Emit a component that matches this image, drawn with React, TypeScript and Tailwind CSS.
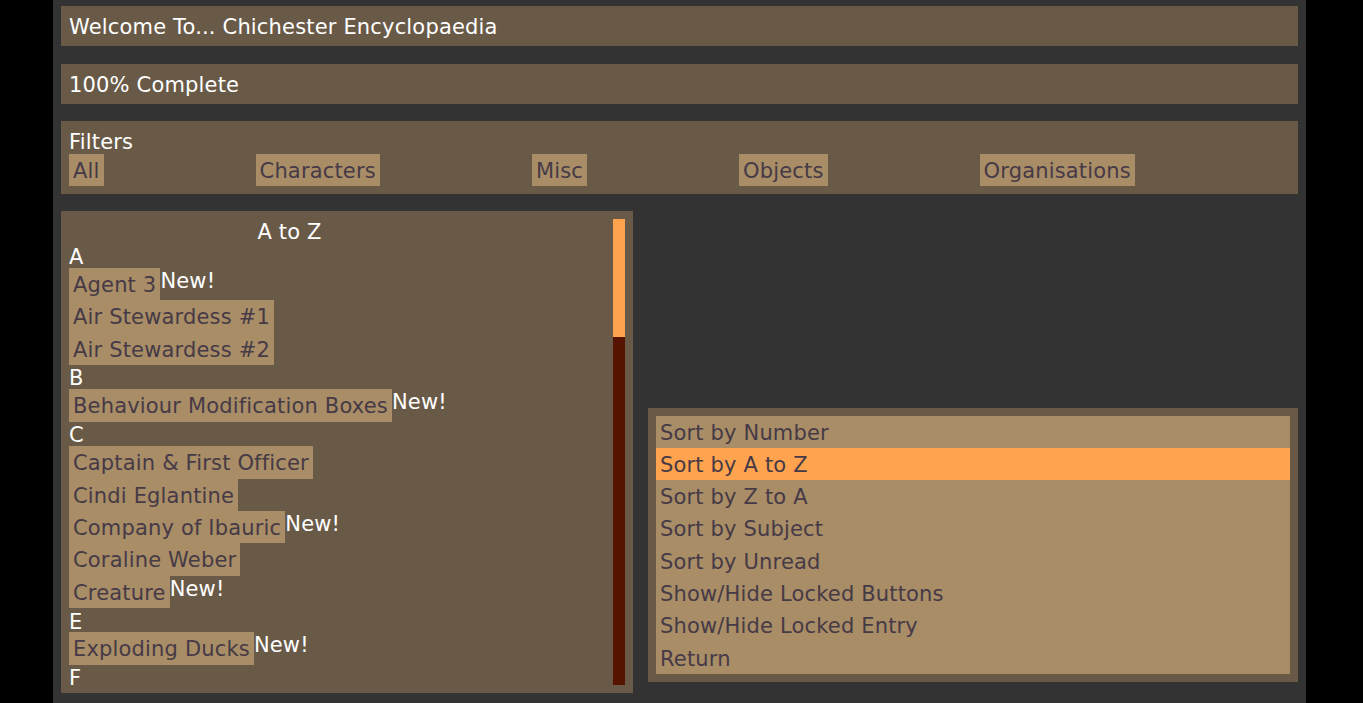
const FILTERS = ['All', 'Characters', 'Misc', 'Objects', 'Organisations'];

type Row = { letter: string } | { name: string; isNew?: boolean };

const ROWS: Row[] = [
  { letter: 'A' },
  { name: 'Agent 3', isNew: true },
  { name: 'Air Stewardess #1' },
  { name: 'Air Stewardess #2' },
  { letter: 'B' },
  { name: 'Behaviour Modification Boxes', isNew: true },
  { letter: 'C' },
  { name: 'Captain & First Officer' },
  { name: 'Cindi Eglantine' },
  { name: 'Company of Ibauric', isNew: true },
  { name: 'Coraline Weber' },
  { name: 'Creature', isNew: true },
  { letter: 'E' },
  { name: 'Exploding Ducks', isNew: true },
  { letter: 'F' },
];

const SORTS = [
  'Sort by Number',
  'Sort by A to Z',
  'Sort by Z to A',
  'Sort by Subject',
  'Sort by Unread',
  'Show/Hide Locked Buttons',
  'Show/Hide Locked Entry',
  'Return',
];

export default function App() {
  return (
    <div
      className="h-[703px] w-full overflow-hidden bg-black text-[21px] leading-[24.4px] tracking-[0.17px]"
      style={{ fontFamily: '"DejaVu Sans", "Liberation Sans", sans-serif' }}
    >
      <div className="ml-[53px] flex h-full w-[1253px] flex-col bg-[#333333] px-2 pt-[6px]">
        {/* Header bars */}
        <div className="flex h-[40px] items-center bg-[#695a48] px-2 pt-[2px] text-white">
          Welcome To... Chichester Encyclopaedia
        </div>
        <div className="mt-[18px] flex h-[40px] items-center bg-[#695a48] px-2 pt-[2px] text-white">
          100% Complete
        </div>

        {/* Filters */}
        <div className="mt-[17px] flex h-[73px] flex-col bg-[#695a48] px-2 pt-[9px]">
          <div className="h-[24px] text-white">Filters</div>
          <div className="flex gap-[152px]">
            {FILTERS.map((f) => (
              <span key={f} className="flex h-[32px] items-center bg-[#a88d66] px-1 pt-[2px] text-[#463a46]">
                {f}
              </span>
            ))}
          </div>
        </div>

        {/* Bottom area */}
        <div className="mt-[17px] flex items-end gap-[15px]">
          <div className="flex h-[482px] w-[572px] gap-2 overflow-hidden bg-[#695a48] p-2">
            <div className="min-w-0 flex-1 overflow-hidden">
              <div className="h-[24.4px] w-[441px] pt-[1px] text-center text-white">A to Z</div>
              {ROWS.map((r, i) =>
                'letter' in r ? (
                  <div key={i} className="h-[24.4px] pt-[1.5px] text-white">
                    {r.letter}
                  </div>
                ) : (
                  <div key={i} className="flex h-[32.4px] items-start">
                    <span className="flex h-full items-center bg-[#a88d66] px-1 pt-[2px] text-[#463a46]">{r.name}</span>
                    {r.isNew && <span className="pt-[1px] text-white">New!</span>}
                  </div>
                ),
              )}
            </div>
            <div className="flex w-[12px] flex-col">
              <div className="h-[118px] bg-[#ffa34e]" />
              <div className="flex-1 bg-[#561400]" />
            </div>
          </div>

          <div className="mb-[11px] flex-1 bg-[#695a48] p-2">
            <div className="bg-[#a88d66]">
              {SORTS.map((s) => (
                <div
                  key={s}
                  className={`flex h-[32.3px] items-center px-1 pt-[2px] text-[#463a46] ${
                    s === 'Sort by A to Z' ? 'bg-[#ffa34e]' : ''
                  }`}
                >
                  {s}
                </div>
              ))}
            </div>
          </div>
        </div>
      </div>
    </div>
  );
}
